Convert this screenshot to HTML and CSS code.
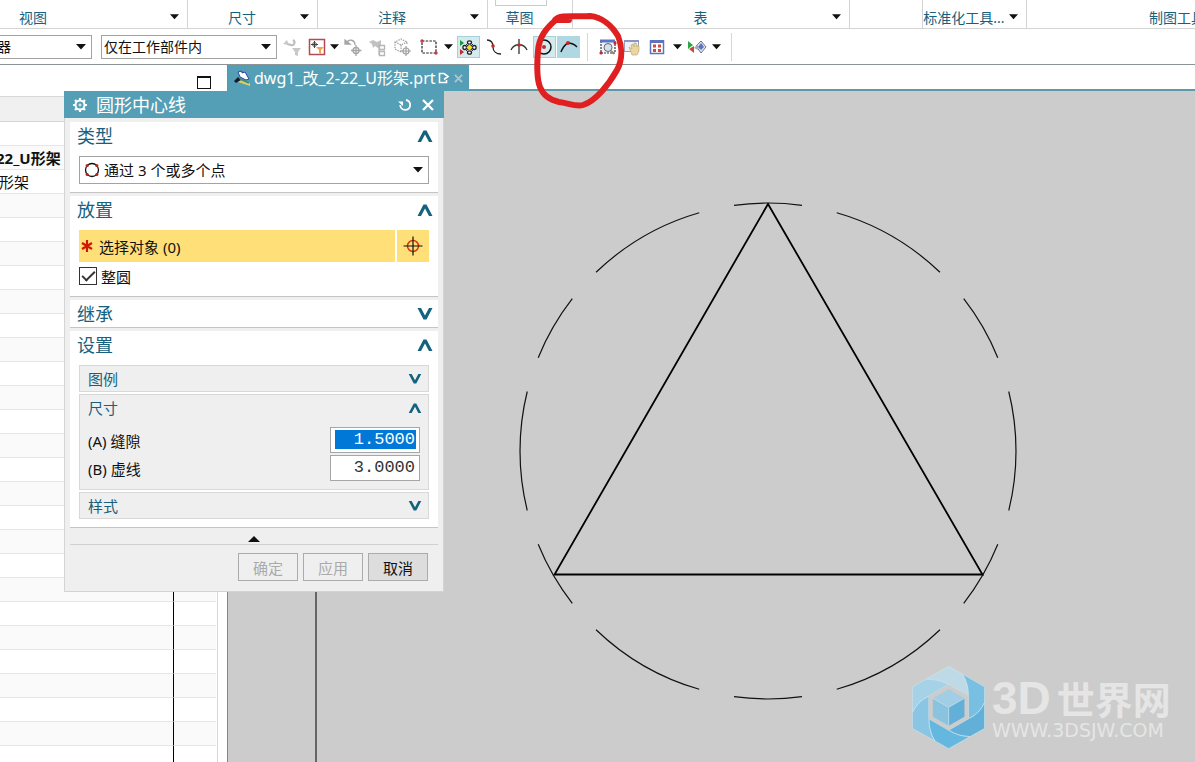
FILE: index.html
```html
<!DOCTYPE html>
<html lang="zh-CN">
<head>
<meta charset="utf-8">
<title>dwg1_改_2-22_U形架.prt</title>
<link rel="stylesheet" href="styles.css">
</head>
<body>
<svg class="defs" aria-hidden="true">
  <symbol id="down" viewBox="0 0 10 6"><path d="M0 0h10L5 5.500z" fill="#111"/></symbol>
  <symbol id="chev-up" viewBox="0 0 16 12"><path d="M0.500 12L6.500 0.500h3L15.500 12h-3.500L8 4.500 4 12z" fill="#13627f"/></symbol>
  <symbol id="chev-down" viewBox="0 0 16 12"><path d="M0.500 0L6.500 11.500h3L15.500 0h-3.500L8 7.500 4 0z" fill="#13627f"/></symbol>
  <symbol id="target" viewBox="0 0 20 20"><circle cx="10" cy="10" r="5.500" fill="none" stroke="currentColor" stroke-width="1.500"/><path d="M10 0.500v19M0.500 10h19" stroke="#111" stroke-width="1.200"/></symbol>
</svg>

<header class="ribbon">
  <div class="group first"><span class="label">视图</span><svg class="arrow"><use href="#down"/></svg></div>
  <div class="group"><span class="label">尺寸</span><svg class="arrow"><use href="#down"/></svg></div>
  <div class="group"><span class="label">注释</span><svg class="arrow"><use href="#down"/></svg></div>
  <div class="group sketch"><span class="label">草图</span><i class="gallery"></i></div>
  <div class="group"><span class="label">表</span><svg class="arrow"><use href="#down"/></svg></div>
  <div class="group"></div>
  <div class="group"><span class="label">标准化工具...</span><svg class="arrow"><use href="#down"/></svg></div>
  <div class="group last"><span class="label">制图工具</span></div>
</header>

<div class="toolbar">
  <div class="combo filter"><select aria-label="选择过滤器"><option>器</option></select><svg class="combo-arrow"><use href="#down"/></svg></div>
  <div class="combo scope"><select aria-label="选择范围"><option>仅在工作部件内</option></select><svg class="combo-arrow"><use href="#down"/></svg></div>
  <div class="tools">
    <button class="tool" aria-label="重置过滤器"><svg viewBox="0 0 22 22"><path d="M11 4c3 2 1 6-2 5s-4 0-4-2" fill="none" stroke="#c0c0c0" stroke-width="2.200"/><path d="M1 8l4-4 2 5zM10 12h9l-3 4v4l-3-1v-3z" fill="#c8c8c8"/></svg></button>
    <button class="tool" aria-label="常规选择过滤器"><svg viewBox="0 0 22 22"><rect x="3.500" y="3.500" width="15" height="15" fill="#fff" stroke="#b44a52" stroke-width="1.500"/><circle cx="8.500" cy="8.500" r="2" fill="none" stroke="#a44"/><path d="M8.500 5v7M5 8.500h7" stroke="#444"/><path d="M10 11h8l-3 3v4l-2-1v-3z" fill="#efa54e"/></svg></button>
    <svg class="arrow"><use href="#down"/></svg>
    <button class="tool" aria-label="取消选择"><svg viewBox="0 0 22 22" fill="none" stroke="#a5a5a5" stroke-width="1.300"><path d="M5 7c1-4 8-4 8 2"/><path d="M3 4v4h5z" fill="#a5a5a5"/><path d="M14 9v11M9 14.500h10.500"/><circle cx="14" cy="14.500" r="3"/></svg></button>
    <button class="tool" aria-label="查找组件"><svg viewBox="0 0 22 22"><path d="M2 6l4-2 4 2 4-2v5l-3 3-3-2-2 2-1-4z" fill="#c2c2c2"/><path d="M12 9v10M12.500 9.500h5v4h-5zM12.500 15.500h5v4h-5z" fill="none" stroke="#b5b5b5" stroke-width="1.300"/></svg></button>
    <button class="tool" aria-label="多选"><svg viewBox="0 0 22 22" fill="none" stroke="#a0a0a0" stroke-width="1.200"><path d="M9 16l-6-3V6l6-3 6 3v3M3 6l6 3 6-3M9 9v7" stroke-dasharray="1.500 1"/><path d="M14 10v10M9 15h10"/><circle cx="14" cy="15" r="3"/></svg></button>
    <button class="tool" aria-label="矩形选择"><svg viewBox="0 0 22 22"><rect x="4" y="5" width="14" height="12" fill="none" stroke="#222" stroke-width="1.200" stroke-dasharray="2.500 1.200"/><circle cx="4" cy="5" r="1.700" fill="#c33d42"/><circle cx="18" cy="17" r="1.700" fill="#c33d42"/></svg></button>
    <svg class="arrow"><use href="#down"/></svg>
    <button class="tool on" aria-label="启用捕捉点"><svg viewBox="0 0 22 22"><path d="M3 4l4 3-4 3z" fill="#159a31"/><path d="M3 13l4 3-4 3z" fill="#c72a2a"/><path d="M9 8l7 7M16 8l-7 7" stroke="#333"/><g fill="#fff" stroke="#222" stroke-width="1.300"><ellipse cx="12.500" cy="6.500" rx="2" ry="1.700"/><ellipse cx="7.700" cy="11.500" rx="1.800" ry="2"/><ellipse cx="17.300" cy="11.500" rx="1.800" ry="2"/><ellipse cx="12.500" cy="16.500" rx="2" ry="1.700"/></g><path d="M12.500 8.500l3 3-3 3-3-3z" fill="#f5dc35" stroke="#8a7b16" stroke-width=".7"/></svg></button>
    <button class="tool" aria-label="端点"><svg viewBox="0 0 22 22"><path d="M4 4c5 0 6 3 6 7s3 7 8 7" fill="none" stroke="#222" stroke-width="1.300"/><circle cx="10" cy="10" r="1.800" fill="#c62b2b"/></svg></button>
    <button class="tool" aria-label="交点"><svg viewBox="0 0 22 22"><path d="M11 3v15M3 14c3-7 13-7 16 0" fill="none" stroke="#333" stroke-width="1.300"/><circle cx="11" cy="9" r="1.800" fill="#c62b2b"/></svg></button>
    <button class="tool soft" aria-label="圆弧中心"><svg viewBox="0 0 22 22"><circle cx="11" cy="11" r="7" fill="none" stroke="#111" stroke-width="1.500"/><circle cx="11" cy="11" r="2" fill="#c62b2b"/></svg></button>
    <button class="tool strong" aria-label="曲线上的点"><svg viewBox="0 0 22 22"><path d="M3 16c1-3 4-8 7-9 3 0 6 1 9 4" fill="none" stroke="#111" stroke-width="1.500"/><circle cx="10" cy="7" r="1.900" fill="#d32020"/></svg></button>
    <i class="sep"></i>
    <button class="tool" aria-label="窗口缩放"><svg viewBox="0 0 22 22"><path d="M4 5v12h14V5" fill="#f4f5fb" stroke="#334" stroke-width="1.200" stroke-dasharray="2 1"/><path d="M3 5h15" stroke="#5c74c8" stroke-width="3"/><circle cx="11" cy="11.500" r="4" fill="#d3e3ea" stroke="#666"/><path d="M14 15l3 3" stroke="#9b8a4a" stroke-width="2"/><circle cx="4" cy="17" r="1.600" fill="#c62b2b"/><circle cx="18" cy="7" r="1.600" fill="#c62b2b"/></svg></button>
    <button class="tool" aria-label="平移"><svg viewBox="0 0 22 22"><rect x="3.500" y="4.500" width="14" height="11" fill="#f0f1f6" stroke="#9a9eb8"/><path d="M3 5h15" stroke="#8896c8" stroke-width="2"/><path d="M8 11l3 2-1-4 2-1 1 3 0-4 2 0 1 4 1-2 1 1v5l-2 4h-5z" fill="#ead6a0" stroke="#b6a26c" stroke-width=".6"/></svg></button>
    <button class="tool" aria-label="适合窗口"><svg viewBox="0 0 22 22"><rect x="4.500" y="5" width="13" height="12.500" fill="#fff" stroke="#5b74bd" stroke-width="1.500"/><path d="M4 5.500h14" stroke="#5b74bd" stroke-width="3"/><path d="M7 8.500h3v3H7zm5 0h3v3h-3zm-5 4.500h3v3H7zm5 0h3v3h-3z" fill="#d04b3e"/></svg></button>
    <svg class="arrow"><use href="#down"/></svg>
    <button class="tool" aria-label="渲染样式"><svg viewBox="0 0 22 22"><path d="M2 5l5 4-5 4z" fill="#2aa846"/><path d="M3 13l5-3v7z" fill="#c9453c"/><path d="M10 10l5-5 5 6-5 6z" fill="#dfe4f2" stroke="#6b7596"/><path d="M15 7l3 4-3 3-3-3z" fill="#5c74b8"/><path d="M8 12l4-4v6z" fill="#a9abb3"/></svg></button>
    <svg class="arrow"><use href="#down"/></svg>
    <i class="sep"></i>
  </div>
</div>

<main class="work">
  <aside class="navigator">
    <div class="nav-head"><button class="float" aria-label="浮动窗口"></button></div>
    <div class="nav-body">
      <table class="tree">
        <thead><tr><th></th><th></th></tr></thead>
        <tbody>
          <tr><td></td><td></td></tr>
          <tr><td class="part">22_U形架</td><td></td></tr>
          <tr><td class="child">形架</td><td></td></tr>
          <tr><td></td><td></td></tr><tr><td></td><td></td></tr><tr><td></td><td></td></tr>
          <tr><td></td><td></td></tr><tr><td></td><td></td></tr><tr><td></td><td></td></tr>
          <tr><td></td><td></td></tr><tr><td></td><td></td></tr><tr><td></td><td></td></tr>
          <tr><td></td><td></td></tr><tr><td></td><td></td></tr><tr><td></td><td></td></tr>
          <tr><td></td><td></td></tr><tr><td></td><td></td></tr><tr><td></td><td></td></tr>
          <tr><td></td><td></td></tr><tr><td></td><td></td></tr><tr><td></td><td></td></tr>
          <tr><td></td><td></td></tr><tr><td></td><td></td></tr><tr><td></td><td></td></tr>
          <tr><td></td><td></td></tr><tr><td></td><td></td></tr><tr><td></td><td></td></tr>
        </tbody>
      </table>
    </div>
  </aside>

  <section class="view">
    <div class="tabs">
      <div class="tab">
        <svg class="tab-icon" viewBox="0 0 16 16"><path d="M1 11l2-3 13 5v3z" fill="#d9cf62"/><path d="M0 11l4-4 3 3-5 3z" fill="#151a35"/><path d="M4 2l4-1 0 2 3-1 4 7-3 1-6-3z" fill="#fff" stroke="#2945a8"/><path d="M6 9l9 4" stroke="#3e8a7a" stroke-width="1.500"/></svg>
        <span class="tab-name">dwg1_改_2-22_U形架.prt</span>
        <svg class="tab-mod" viewBox="0 0 12 12"><path d="M6 1.500H1.500v9h7V8M6 1.500l4 3-4 3" fill="none" stroke="#fff" stroke-width="1.600"/></svg>
        <button class="tab-close" aria-label="关闭"><svg viewBox="0 0 10 10"><path d="M1 1l8 8M9 1l-8 8" stroke="#b9c3c6" stroke-width="2"/></svg></button>
      </div>
    </div>
    <div class="canvas">
      <svg class="drawing" viewBox="0 0 967 671">
        <path d="M88 0v671" stroke="#666" stroke-width="2"/>
        <circle cx="540" cy="360" r="248" pathLength="360" fill="none" stroke="#111" stroke-width="1.200" stroke-dasharray="27.800 8.200 15.800 8.200" stroke-dashoffset="13.900"/>
        <path d="M540 113l214.500 370.500h-428z" fill="none" stroke="#000" stroke-width="1.800"/>
      </svg>
      <div class="watermark">
        <svg class="wm-logo" viewBox="96 81 217 247">
          <g stroke="#cfe3ec" stroke-width="2">
            <path d="M138 120L205 82l41 23q18 28 18 65l-59-34q-30-16-67-16z" fill="#bfdae7"/>
            <path d="M246 105l66 38v46q-14 34-48 49v-68q0-38-18-65z" fill="#78bfe1"/>
            <path d="M312 189v78l-43 24q-35 0-64-19l59-34q34-15 48-49z" fill="#62b0d8"/>
            <path d="M269 291l-64 36-41-23q-18-27-18-66l59 34q29 19 64 19z" fill="#64b8e0"/>
            <path d="M164 304l-67-37v-48q14-32 49-49v68q0 39 18 66z" fill="#8ac5e3"/>
            <path d="M97 219v-76l41-23q37 0 67 16l-59 34q-35 17-49 49z" fill="#a6d2e7"/>
          </g>
          <path d="M205 137l59 33v68l-59 34-59-34v-68z" fill="#ccc"/>
          <path d="M205 150l47 27-47 27-47-27z" fill="#a1cee4"/>
          <path d="M158 177l47 27v55l-47-27z" fill="#8ac3e0"/>
          <path d="M252 177l-47 27v55l47-27z" fill="#62b0d8"/>
          <path d="M158 177l47 27 47-27M205 204v55" fill="none" stroke="#cbe2ed" stroke-width="2"/>
        </svg>
        <div class="wm-text">
          <div class="wm-name"><span class="wm-latin">3D</span>世界网</div>
          <div class="wm-url">WWW.3DSJW.COM</div>
        </div>
      </div>
    </div>
  </section>
</main>

<form class="dialog" role="dialog" aria-labelledby="dlg-title">
  <div class="title">
    <svg class="gear" viewBox="0 0 16 16" fill="none" stroke="#fff"><circle cx="8" cy="8" r="4.500" stroke-width="2"/><circle cx="8" cy="8" r="1" stroke-width="1"/><path d="M8 1v2.500M8 12.500V15M1 8h2.500M12.500 8H15M3 3l2 2M11 11l2 2M13 3l-2 2M5 11l-2 2" stroke-width="2.200"/></svg>
    <h1 id="dlg-title">圆形中心线</h1>
    <button type="button" class="plain" aria-label="重置"><svg viewBox="0 0 14 14"><path d="M8 2a5 5 0 1 1-5.800 5" fill="none" stroke="#fff" stroke-width="1.800"/><path d="M0 3.500h5V8z" fill="#fff"/></svg></button>
    <button type="button" class="plain" aria-label="关闭对话框"><svg viewBox="0 0 14 14"><path d="M2 2l10 10M12 2L2 12" stroke="#fff" stroke-width="2.300"/></svg></button>
  </div>
  <div class="body">
    <section class="panel type">
      <h2>类型<svg><use href="#chev-up"/></svg></h2>
      <div class="combo kind">
        <svg class="kind-icon" viewBox="0 0 16 16"><circle cx="8" cy="8" r="6.500" fill="none" stroke="#111" stroke-width="1.300"/><g fill="#b82222"><circle cx="3.200" cy="3.500" r="1.600"/><circle cx="12.800" cy="3.500" r="1.600"/><circle cx="3.200" cy="12.500" r="1.600"/><circle cx="12.800" cy="12.500" r="1.600"/></g></svg>
        <select aria-label="类型"><option>通过 3 个或多个点</option></select>
        <svg class="combo-arrow"><use href="#down"/></svg>
      </div>
    </section>
    <section class="panel place">
      <h2>放置<svg><use href="#chev-up"/></svg></h2>
      <div class="pick">
        <button type="button" class="pick-main"><svg class="star" viewBox="0 0 12 12"><path d="M6 0v12M1 3l10 6M11 3L1 9" stroke="#d01800" stroke-width="2.200"/></svg>选择对象 (0)</button>
        <button type="button" class="pick-btn" aria-label="选择对象"><svg><use href="#target"/></svg></button>
      </div>
      <label class="check"><input type="checkbox" checked>整圆</label>
    </section>
    <section class="panel inherit">
      <h2>继承<svg><use href="#chev-down"/></svg></h2>
    </section>
    <section class="panel settings">
      <h2>设置<svg><use href="#chev-up"/></svg></h2>
      <div class="subs">
        <div class="sub"><h3>图例<svg><use href="#chev-down"/></svg></h3></div>
        <div class="sub">
          <h3>尺寸<svg><use href="#chev-up"/></svg></h3>
          <div class="fields">
            <label for="gap">(A) 缝隙</label><span class="num"><input id="gap" class="selected" type="text" value="1.5000"></span>
            <label for="dash">(B) 虚线</label><span class="num"><input id="dash" type="text" value="3.0000"></span>
          </div>
        </div>
        <div class="sub"><h3>样式<svg><use href="#chev-down"/></svg></h3></div>
      </div>
    </section>
    <div class="fold"><svg viewBox="0 0 12 6"><path d="M0 6L6 0l6 6z" fill="#111"/></svg></div>
    <div class="actions">
      <button type="button" disabled>确定</button>
      <button type="button" disabled>应用</button>
      <button type="button" class="cancel">取消</button>
    </div>
  </div>
</form>

<svg class="mark" viewBox="0 0 96 104" aria-hidden="true"><path d="M39 14l-14 0C30 8 45 11 60 10c12 1 22 10 28 20 4 10 5 23-1 34-8 14-21 31-34 35-7 2-15-2-24-3-9-2-16-7-19-15-4-10-3-24-2-36 1-14 8-23 19-32" fill="none" stroke="#e02020" stroke-width="6" stroke-linecap="round" stroke-linejoin="round"/></svg>
</body>
</html>
```
FILE: styles.css
```css
* { box-sizing: border-box; }
body {
  margin: 0;
  height: 100vh;
  overflow: hidden;
  position: relative;
  display: flex;
  flex-direction: column;
  background: #fff;
  color: #111;
  font-family: "Noto Sans", "Noto Sans CJK SC", sans-serif;
  font-size: 14px;
}
button, select, input { font: inherit; color: inherit; border-radius: 0; margin: 0; }
button { padding: 0; border: 0; background: none; }
h1, h2, h3 { margin: 0; font-weight: 400; }
svg { display: block; }
.defs { position: absolute; width: 0; height: 0; }

.ribbon {
  flex: none;
  display: grid;
  grid-template-columns: 188px 130px 170px 85px 277px 73px 104px 1fr;
  height: 29px;
  padding-bottom: 4px;
  border-bottom: 1px solid #d4d4d4;
  overflow: hidden;
}
.group {
  position: relative;
  display: grid;
  grid-template-columns: 1fr 21px;
  border-right: 1px solid #d4d4d4;
  color: #17617d;
  min-width: 0;
}
.label { padding-top: 8px; line-height: 20px; text-align: center; white-space: nowrap; }
.group .arrow { margin: 14px 0 0 4px; }
.first { margin-left: -100px; }
.last { border: 0; }
.last .label { text-align: left; padding-left: 122px; }
.gallery { position: absolute; left: 7px; top: -4px; width: 52px; height: 10px; border: 1px solid #ccc; }
.arrow { width: 9px; height: 6px; }

.toolbar {
  flex: none;
  display: flex;
  align-items: center;
  height: 36px;
  border-bottom: 1px solid #8a9496;
}
.combo { display: grid; align-items: center; }
.combo select {
  grid-area: 1 / 1;
  width: 100%;
  height: 24px;
  border: 1px solid #a3a3a3;
  background: #fff;
  appearance: none;
  padding: 0 20px 0 2px;
}
.combo-arrow { grid-area: 1 / 1; justify-self: end; width: 10px; height: 6px; margin-right: 6px; pointer-events: none; }
.filter { width: 96px; margin-left: -4px; }
.filter select { padding-left: 0; }
.scope { width: 176px; margin-left: 9px; }
.tools {
  display: grid;
  grid-template-columns: 24px 24px 10px 28px 22px 28px 24px 14px 26px 26px 24px 26px 23px 14px 28px 20px 30px 10px 29px 10px 20px;
  place-items: center;
  margin-left: 4px;
}
.tool { width: 23px; height: 22px; display: grid; place-items: center; }
.tool svg { width: 22px; height: 22px; }
.on, .soft { background: #d3ebef; outline: 1px solid #a9d0d8; outline-offset: -1px; }
.strong { background: #afd8e2; }
.sep { width: 1px; height: 28px; background: #d6d6d6; }

.work { flex: 1; display: flex; min-height: 0; }
.navigator { flex: none; width: 228px; display: flex; flex-direction: column; border-right: 1px solid #858585; }
.nav-head { flex: none; height: 32px; display: flex; justify-content: flex-end; padding: 11px 16px 0 0; border-bottom: 1px solid #d8d8d8; }
.float { width: 14px; height: 13px; border: 1px solid #111; border-top-width: 2px; }
.nav-body { flex: 1; min-height: 0; overflow: hidden; margin-right: 9px; padding-right: 1px; border-right: 1px solid #d5d5d5; }
.tree { width: 100%; border-collapse: separate; border-spacing: 0; table-layout: fixed; font-size: 15px; }
.tree th, .tree td { height: 24px; padding: 0; line-height: 20px; border-bottom: 1px solid #e6e6e6; white-space: nowrap; }
.tree th { height: 25px; background: #f0f0f0; border-bottom-color: #d5d5d5; }
.tree th:first-child { width: 174px; }
.tree td:first-child { border-right: 1px solid #000; }
.tree tbody tr:nth-child(even) { background: #fafafa; }
.tree .part { font-weight: 700; text-indent: -4px; }
.tree .child { text-indent: -1px; }

.view { flex: 1; min-width: 0; display: flex; flex-direction: column; }
.tabs { flex: none; height: 26px; border-bottom: 2px solid #5c9aa9; }
.tab { display: flex; align-items: center; width: 241px; height: 26px; padding-left: 6px; background: #549fb6; color: #fff; }
.tab-icon { width: 16px; height: 16px; }
.tab-name { flex: 1; margin-left: 4px; font-size: 16px; line-height: 24px; white-space: nowrap; }
.tab-mod { width: 12px; height: 12px; margin-right: 4px; }
.tab-close { margin-right: 6px; }
.tab-close svg { width: 9px; height: 9px; }
.canvas { flex: 1; min-height: 0; position: relative; overflow: hidden; background: #ccc; }
.drawing { position: absolute; left: 0; top: 0; width: 967px; height: 671px; }
.watermark { position: absolute; right: 24px; bottom: 13px; display: flex; align-items: center; gap: 7px; color: #e5e5e5; }
.wm-logo { width: 73px; height: 83px; }
.wm-text { width: 179px; }
.wm-name { font: 700 38px/44px "Noto Sans CJK SC", sans-serif; white-space: nowrap; }
.wm-latin { font: 700 46px/44px "Liberation Sans", sans-serif; margin-right: 6px; }
.wm-url { font: 19px/20px "DejaVu Sans", sans-serif; white-space: nowrap; }

.dialog {
  position: absolute;
  left: 64px;
  top: 91px;
  width: 380px;
  background: #efefef;
  font-size: 15px;
}
.title { display: flex; align-items: center; height: 27px; padding: 0 9px 0 8px; background: #549fb6; color: #fff; }
.title h1 { flex: 1; margin-left: 8px; font-size: 18px; line-height: 26px; }
.gear { width: 16px; height: 16px; }
.plain { margin-left: 9px; }
.plain svg { width: 14px; height: 14px; }
.body { padding: 4px 5px 10px; border: 1px solid #d4d4d4; border-top: 0; }
.panel { background: #fff; border-bottom: 1px solid #c4c4c4; margin-bottom: 3px; padding: 0 9px; }
.panel h2 { display: flex; justify-content: space-between; align-items: center; margin: 0 -4px 0 -2px; height: 28px; font-size: 18px; line-height: 26px; color: #17617d; }
.panel h2 svg { width: 16px; height: 12px; }
.type { padding-bottom: 8px; }
.type h2, .place h2, .settings h2 { margin-bottom: 6px; }
.kind select { height: 28px; padding-left: 24px; }
.kind-icon { grid-area: 1 / 1; z-index: 1; width: 16px; height: 16px; margin-left: 5px; pointer-events: none; }
.place { padding-bottom: 11px; }
.pick { display: grid; grid-template-columns: 1fr 32px; gap: 2px; height: 32px; }
.pick-main, .pick-btn { background: #ffdf78; display: flex; align-items: center; }
.pick-main { gap: 6px; padding-left: 2px; }
.star { width: 12px; height: 12px; }
.pick-btn { justify-content: center; }
.pick-btn svg { width: 20px; height: 20px; color: #d63a10; }
.check { display: flex; align-items: center; gap: 4px; height: 18px; margin-top: 5px; }
.check input { appearance: none; width: 18px; height: 18px; border: 1px solid #333; background: #fff; display: grid; place-items: center; }
.check input:checked::before { content: ""; width: 11px; height: 5px; margin-bottom: 4px; border: solid #333; border-width: 0 0 2px 2px; transform: rotate(-45deg); }
.inherit h2 { height: 27px; }
.settings { padding-bottom: 8px; }
.subs { display: grid; gap: 2px; }
.sub { border: 1px solid #d8d8d8; background: #efefef; padding: 0 6px 0 8px; }
.sub h3 { display: flex; justify-content: space-between; align-items: center; height: 25px; font-size: 15px; line-height: 24px; color: #17617d; }
.sub h3 svg { width: 14px; height: 10px; }
.fields { display: grid; grid-template-columns: 1fr 90px; gap: 2px; align-items: center; padding: 7px 2px 8px 0; }
.num { height: 26px; display: flex; padding: 2px 3px 3px 4px; border: 1px solid #a6a6a6; background: #fff; }
.num input { width: 100%; height: 19px; border: 0; outline: 0; padding: 0 1px 0 0; text-align: right; background: #fff; font: 17px/19px "Liberation Mono", monospace; color: #333; }
.num .selected { background: #0078d7; color: #fff; }
.fold { display: flex; justify-content: center; align-items: center; height: 16px; margin-top: -2px; padding-top: 5px; border-bottom: 1px solid #d0d0d0; }
.fold svg { width: 12px; height: 6px; }
.actions { display: flex; justify-content: flex-end; gap: 5px; padding: 8px 10px 0 0; }
.actions button { width: 60px; height: 28px; border: 1px solid #ababab; background: #efefef; }
.actions button:disabled { color: #aaa; }
.actions .cancel { background: #ddd; }

.mark { position: absolute; left: 530px; top: 6px; width: 96px; height: 104px; pointer-events: none; }
```
